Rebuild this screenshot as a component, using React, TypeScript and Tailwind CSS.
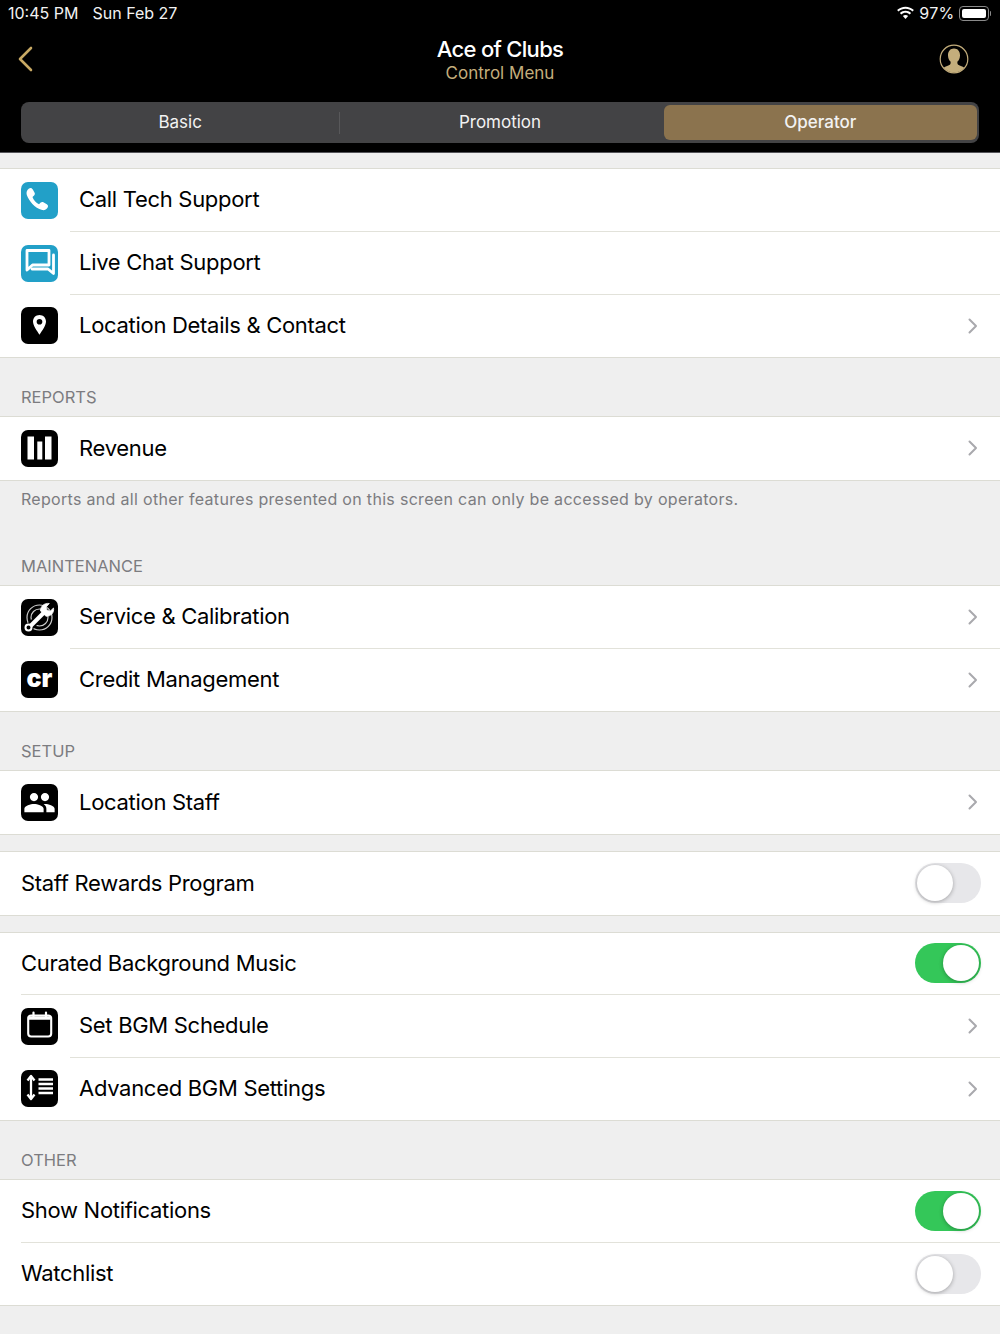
import type { ReactNode } from "react";
import { MdPeople } from "react-icons/md";

const BackIcon = () => (
  <svg width="16" height="26" viewBox="0 0 16 26" fill="none">
    <path d="M14 2 L3 13 L14 24" stroke="#c8a964" strokeWidth="2.6" strokeLinecap="round" strokeLinejoin="round" />
  </svg>
);

const ProfileIcon = () => (
  <svg width="30" height="30" viewBox="0 0 30 30" fill="none">
    <defs>
      <clipPath id="avatar">
        <circle cx="15" cy="15" r="13.4" />
      </clipPath>
    </defs>
    <g clipPath="url(#avatar)">
      <path
        d="M15 4.500c-3.800 0-6 2.900-6 6.700 0 2.600 1 5 2.500 6.400.3 1.400.1 2.600-.7 3.200-1.500 1-5.300 1.800-6.300 3.400v6h21v-6c-1-1.600-4.800-2.400-6.300-3.400-.8-.6-1-1.800-.7-3.200 1.500-1.400 2.500-3.800 2.500-6.400 0-3.800-2.200-6.700-6-6.700z"
        fill="#c4ae7c"
      />
    </g>
    <circle cx="15" cy="15" r="13.8" stroke="#c4ae7c" strokeWidth="1.2" />
  </svg>
);

const WifiIcon = () => (
  <svg width="19" height="14" viewBox="0 0 19 14" fill="#fff">
    <path d="M9.500 2.800c2.700 0 5.100 1 7 2.800l1.400-1.500C15.700 2 12.700.7 9.500.7S3.300 2 1.100 4.100l1.400 1.500c1.900-1.800 4.300-2.800 7-2.800z" />
    <path d="M9.500 6.800c1.600 0 3 .6 4.200 1.600l1.400-1.500c-1.500-1.400-3.500-2.200-5.600-2.200s-4.100.8-5.600 2.200l1.400 1.500c1.200-1 2.600-1.600 4.200-1.600z" />
    <path d="M9.500 9c-1 0-1.900.4-2.600 1l2.600 2.900 2.600-2.900c-.7-.6-1.600-1-2.600-1z" />
  </svg>
);

const Battery = () => (
  <div className="flex items-center">
    <div className="h-[15px] w-[30px] rounded-[4px] border border-[#8a8a8a] p-[2px]">
      <div className="h-full w-full rounded-[2px] bg-white" />
    </div>
    <div className="ml-[1px] h-[5px] w-[1.5px] rounded-r-sm bg-[#8a8a8a]" />
  </div>
);

const IconBox = ({ blue, children }: { blue?: boolean; children: ReactNode }) => (
  <div
    className={`flex h-[37px] w-[37px] shrink-0 items-center justify-center rounded-[7px] text-white ${
      blue ? "bg-[#22a0c8]" : "bg-black"
    }`}
  >
    {children}
  </div>
);

const PhoneIcon = () => (
  <svg width="37" height="37" viewBox="0 0 37 37" fill="#fff">
    <path d="M8 6.500c1.500-1 3-.5 3.800 1l1.800 3.300c.5 1 .3 2-.5 2.700l-1.600 1.400c1 3 3.500 5.800 6.500 7.300l1.700-1.600c.8-.7 1.800-.8 2.700-.3l3.400 2c1.300.8 1.600 2.300.7 3.500-1.300 1.700-3 2.700-5.300 2.200C13.500 26 8 19 5.800 13c-.8-2.500.2-5.200 2.200-6.500z" />
  </svg>
);

const ChatIcon = () => (
  <svg width="37" height="37" viewBox="0 0 37 37" fill="none" stroke="#fff" strokeWidth="2.800" strokeLinejoin="round">
    <path d="M6 5.500h22v14.500H11.500L6 25z" />
    <path d="M32.500 10v18.500l-5.500-4.500H11" strokeLinecap="round" />
  </svg>
);

const PinIcon = () => (
  <svg width="15" height="23" viewBox="0 0 18 27">
    <path
      fillRule="evenodd"
      d="M9 1C4.500 1 1.200 4.400 1.200 8.800c0 5 4.800 11.300 7.800 15.700 3-4.400 7.800-10.700 7.800-15.700C16.800 4.400 13.500 1 9 1zm0 4.600a3.400 3.400 0 1 1 0 6.800 3.400 3.400 0 0 1 0-6.800z"
      fill="#fff"
    />
  </svg>
);

const BarsIcon = () => (
  <svg width="37" height="37" viewBox="0 0 37 37" fill="#fff">
    <rect x="6.500" y="6.500" width="6.500" height="23" />
    <rect x="16.300" y="11.500" width="5" height="18" />
    <rect x="24" y="6.500" width="6.500" height="23" />
  </svg>
);

const ServiceIcon = () => (
  <svg width="37" height="37" viewBox="0 0 37 37" fill="none" stroke="#fff">
    <circle cx="18.500" cy="18.500" r="8.500" strokeWidth="1.200" opacity="0.8" />
    <circle cx="18.500" cy="18.500" r="12.500" strokeWidth="1.200" opacity="0.8" />
    <path d="M6.500 30 26 10.500" stroke="#000" strokeWidth="8" />
    <path d="M8.500 28 24.500 12" strokeWidth="4" />
    <path d="M19.500 12c-.3-4.500 3.800-8.300 8.800-7.500l-3.300 3.700 1 3 3.200 1 3.300-3.200c1 4.800-3 8.700-7.500 8.200z" fill="#fff" strokeWidth="0.800" />
    <circle cx="7.500" cy="28.500" r="3" fill="#000" strokeWidth="2" />
  </svg>
);

const CalendarIcon = () => (
  <svg width="37" height="37" viewBox="0 0 37 37" fill="none" stroke="#fff">
    <rect x="7.200" y="7.500" width="23" height="21" rx="3" strokeWidth="2.100" />
    <path d="M7.500 10h22" strokeWidth="3.500" />
    <path d="M12.500 4.500v4M25 4.500v4" strokeWidth="2.200" strokeLinecap="round" />
  </svg>
);

const SpacingIcon = () => (
  <svg width="37" height="37" viewBox="0 0 37 37" fill="none" stroke="#fff" strokeWidth="2.300">
    <path d="M10 7v21" />
    <path d="M6.500 10.500 10 6l3.500 4.500M6.500 24.500 10 29l3.500-4.500" strokeLinejoin="round" />
    <path d="M17.500 9.500h14.500M17.500 14h14.500M17.500 18.500h14.500M17.500 23h14.500" />
  </svg>
);

const CrIcon = () => <span className="-mt-[3px] text-[25px] leading-none font-black">cr</span>;

const Chevron = () => (
  <svg width="10" height="16" viewBox="0 0 10 16" fill="none" className="mr-[22px] shrink-0">
    <path d="M1.500 1.500 8 8l-6.500 6.500" stroke="#a9a9ad" strokeWidth="2" strokeLinecap="round" strokeLinejoin="round" />
  </svg>
);

const Toggle = ({ on }: { on?: boolean }) => (
  <div
    className={`mr-[19px] flex h-[40px] w-[66px] shrink-0 items-center rounded-full p-[2px] ${
      on ? "justify-end bg-[#34c759]" : "justify-start bg-[#e7e7ea]"
    }`}
  >
    <div className="h-[36px] w-[36px] rounded-full bg-white shadow-[0_1px_4px_rgba(0,0,0,0.3)]" />
  </div>
);

type RowProps = {
  label: string;
  icon?: ReactNode;
  chevron?: boolean;
  toggle?: "on" | "off";
  last?: boolean;
  size?: string;
};

const Row = ({ label, icon, chevron, toggle, last, size = "h-[63px]" }: RowProps) => (
  <div className={`flex items-stretch bg-white ${size} ${last ? "border-b border-[#dcdcd4]" : ""}`}>
    {icon && <div className="flex w-[70px] shrink-0 items-center pb-[1px] pl-[21px]">{icon}</div>}
    <div
      className={`flex min-w-0 flex-1 items-center justify-between pb-[1px] text-[22px] tracking-[-0.3px] text-black ${
        last ? "" : "border-b border-[#e2e2da]"
      } ${icon ? "pl-[9px]" : "ml-[21px]"}`}
    >
      <span>{label}</span>
      {chevron && <Chevron />}
      {toggle && <Toggle on={toggle === "on"} />}
    </div>
  </div>
);

const Group = ({ rows }: { rows: RowProps[] }) => (
  <div className="border-t border-[#dcdcd4]">
    {rows.map((row, i) => (
      <Row key={row.label} {...row} last={i === rows.length - 1} />
    ))}
  </div>
);

const SectionTitle = ({ children }: { children: ReactNode }) => (
  <div className="flex h-[58px] items-end pb-[8px] pl-[21px] text-[16.5px] leading-[22px] text-[#7c7c80]">
    {children}
  </div>
);

export default function App() {
  return (
    <div className="h-[1334px] w-[1000px] overflow-hidden bg-[#efefef] font-['Inter',sans-serif]">
      {/* Header */}
      <div className="h-[153px] border-b border-[#55555a] bg-black">
        <div className="flex h-[26px] items-center justify-between pl-[8px] pr-[9px] text-[16px] text-[#f2f2f2]">
          <div className="flex gap-[14px]">
            <span>10:45 PM</span>
            <span>Sun Feb 27</span>
          </div>
          <div className="flex items-center">
            <WifiIcon />
            <span className="mr-[4px] ml-[4px] tracking-[0.3px]">97%</span>
            <Battery />
          </div>
        </div>
        <div className="flex h-[76px] items-center justify-between px-[17px] pb-[10px]">
          <div className="w-[60px]">
            <BackIcon />
          </div>
          <div className="mt-[2px] flex flex-col items-center">
            <span className="text-[22px] leading-[26px] font-medium tracking-[-0.7px] text-white">Ace of Clubs</span>
            <span className="text-[17px] leading-[22px] text-[#c4ae7c]">Control Menu</span>
          </div>
          <div className="flex w-[60px] justify-end pr-[14px]">
            <ProfileIcon />
          </div>
        </div>
        <div className="mx-[21px] grid h-[41px] grid-cols-3 items-center rounded-[8px] bg-[#434345] text-[17px] text-[#f2f2f2]">
          <div className="flex items-center">
            <div className="flex-1 pt-[1px] text-center">Basic</div>
            <div className="h-[22px] w-px bg-[#58585a]" />
          </div>
          <div className="pt-[1px] text-center">Promotion</div>
          <div className="py-[3px] pr-[2px] pl-[4px]">
            <div className="flex h-[35px] items-center justify-center rounded-[6px] bg-[#8b734e] pt-[1px] font-medium">
              Operator
            </div>
          </div>
        </div>
      </div>

      <div className="h-[15px]" />
      <Group
        rows={[
          { label: "Call Tech Support", icon: <IconBox blue><PhoneIcon /></IconBox> },
          { label: "Live Chat Support", icon: <IconBox blue><ChatIcon /></IconBox> },
          { label: "Location Details & Contact", icon: <IconBox><PinIcon /></IconBox>, chevron: true },
        ]}
      />
      <SectionTitle>REPORTS</SectionTitle>
      <Group rows={[{ label: "Revenue", icon: <IconBox><BarsIcon /></IconBox>, chevron: true, size: "h-[64px]" }]} />
      <div className="h-[46px] pl-[21px] pt-[6px] text-[16px] leading-[24px] tracking-[0.31px] text-[#7c7c80]">
        Reports and all other features presented on this screen can only be accessed by operators.
      </div>
      <SectionTitle>MAINTENANCE</SectionTitle>
      <Group
        rows={[
          { label: "Service & Calibration", icon: <IconBox><ServiceIcon /></IconBox>, chevron: true },
          { label: "Credit Management", icon: <IconBox><CrIcon /></IconBox>, chevron: true },
        ]}
      />
      <SectionTitle>SETUP</SectionTitle>
      <Group rows={[{ label: "Location Staff", icon: <IconBox><MdPeople size={33} /></IconBox>, chevron: true, size: "h-[64px]" }]} />
      <div className="h-[16px]" />
      <Group rows={[{ label: "Staff Rewards Program", toggle: "off", size: "h-[64px]" }]} />
      <div className="h-[16px]" />
      <Group
        rows={[
          { label: "Curated Background Music", toggle: "on", size: "h-[62px]" },
          { label: "Set BGM Schedule", icon: <IconBox><CalendarIcon /></IconBox>, chevron: true },
          { label: "Advanced BGM Settings", icon: <IconBox><SpacingIcon /></IconBox>, chevron: true },
        ]}
      />
      <SectionTitle>OTHER</SectionTitle>
      <Group
        rows={[
          { label: "Show Notifications", toggle: "on" },
          { label: "Watchlist", toggle: "off" },
        ]}
      />
    </div>
  );
}
